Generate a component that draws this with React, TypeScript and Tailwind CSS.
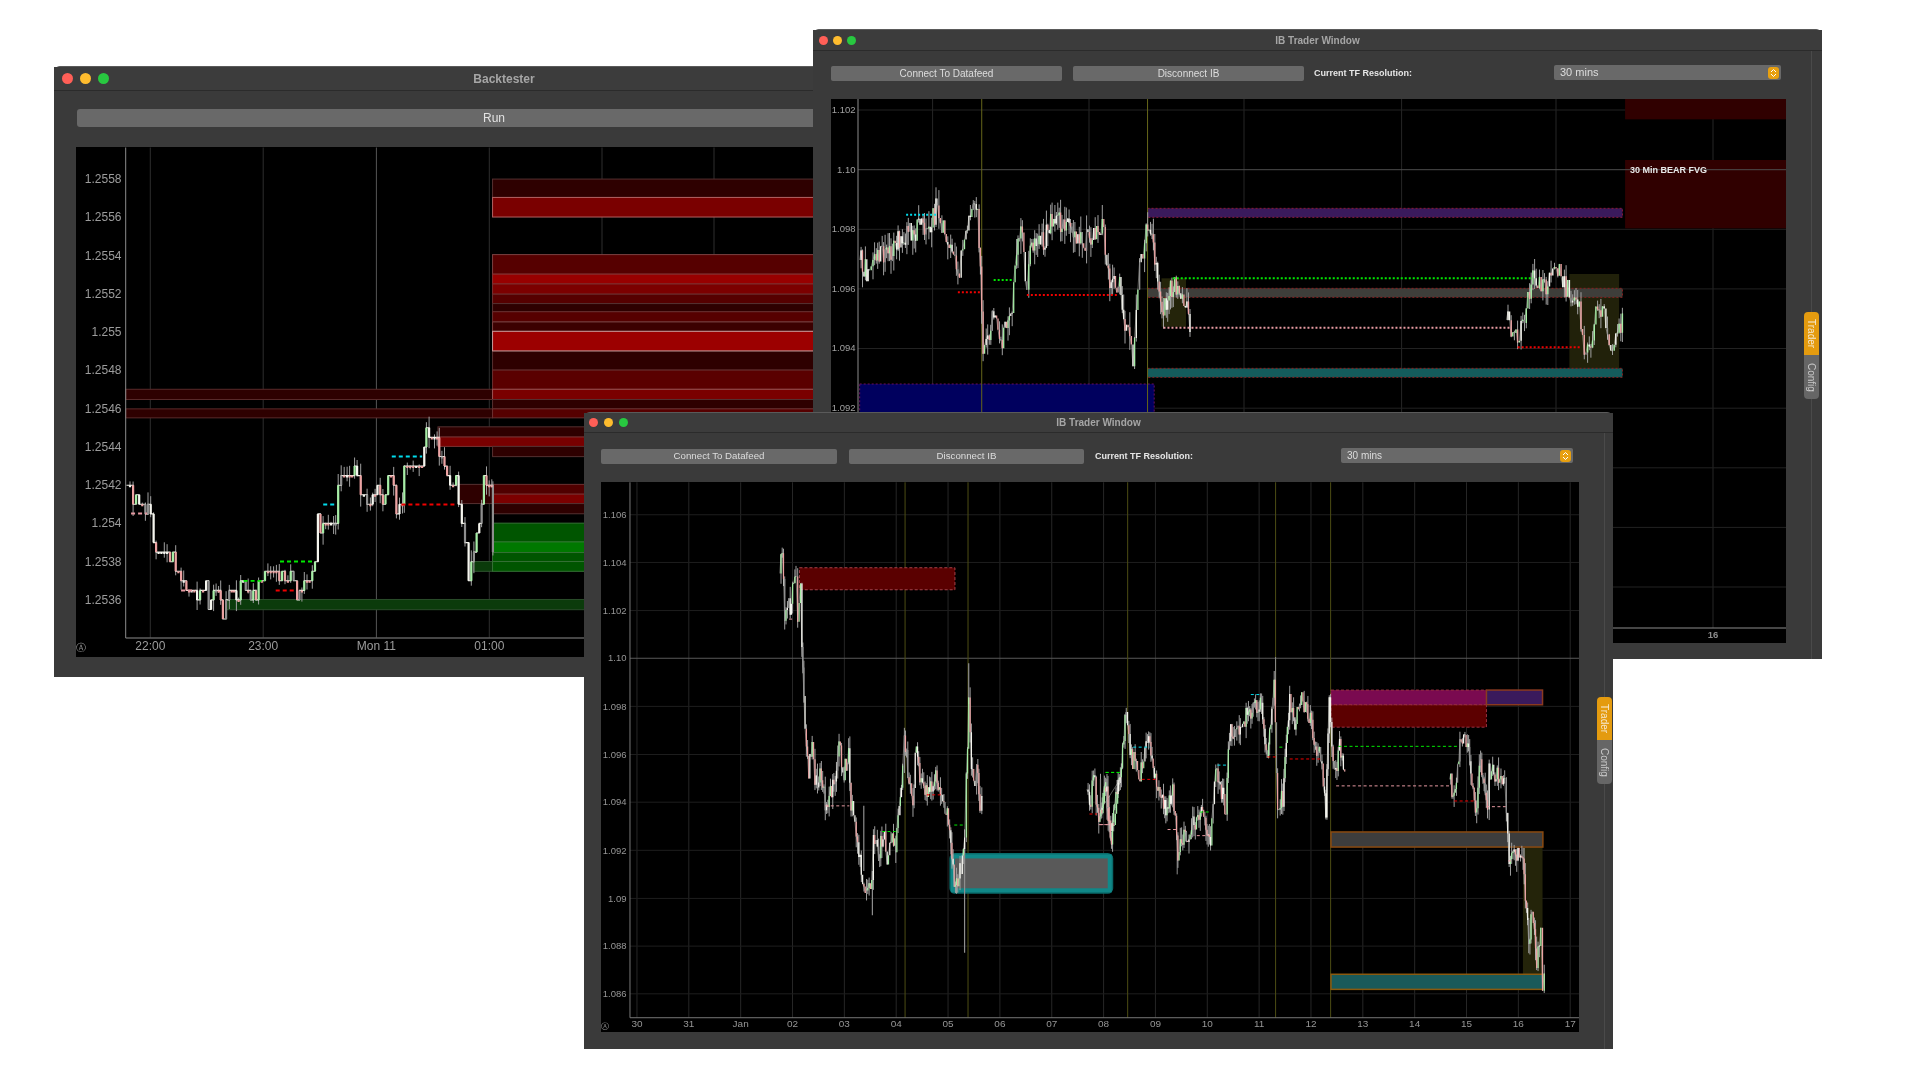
import React from "react";

type P = [number, number];
type Zone = { a: number; b: number; t: number; u: number; fill: string; stroke?: string; dash?: string; sw?: number; rx?: number };
type Dash = { a: number; b: number; y: number; c: string };

const rng = (seed: number) => {
  let s = seed;
  return () => {
    s = (s * 16807) % 2147483647;
    return s / 2147483647;
  };
};

function Candles({ pts, step, noise, seed, width, wick, q, lineW = 0.8 }: { pts: P[]; step: number; noise: number; seed: number; width: number; wick: number; q?: [number, number]; lineW?: number }) {
  const r = rng(seed);
  let wicks = "";
  let green = "";
  let pink = "";
  let white = "";
  let gray = "";
  let line = "";
  const snap = (y: number) => (q ? Math.round((y - q[0]) / q[1]) * q[1] + q[0] : y);
  let prev = snap(pts[0][1]);
  line = `M${pts[0][0]} ${prev}`;
  for (let i = 0; i < pts.length - 1; i++) {
    const [x1, y1] = pts[i];
    const [x2, y2] = pts[i + 1];
    const n = Math.max(1, Math.round((x2 - x1) / step));
    for (let j = 1; j <= n; j++) {
      const x = x1 + ((x2 - x1) * j) / n;
      const y = snap(y1 + ((y2 - y1) * j) / n + (r() - 0.5) * noise);
      const lo = Math.min(prev, y);
      const hi = Math.max(prev, y);
      const seg = `M${x.toFixed(1)} ${lo.toFixed(1)}V${(hi === lo ? hi + 2 : hi).toFixed(1)}`;
      const k = r();
      if (k < 0.28) white += seg;
      else if (k < 0.42) gray += seg;
      else if (y < prev) green += seg;
      else pink += seg;
      if (r() < 0.7) wicks += `M${x.toFixed(1)} ${(lo - r() * wick).toFixed(1)}V${(hi + r() * wick).toFixed(1)}`;
      line += q ? `H${x.toFixed(1)}V${y.toFixed(1)}` : `L${x.toFixed(1)} ${y.toFixed(1)}`;
      prev = y;
    }
  }
  return (
    <g fill="none">
      <path d={wicks} stroke="#a0a0a0" strokeWidth={1} />
      <path d={line} stroke="#f2f2ea" strokeWidth={lineW} />
      <path d={gray} stroke="#8e8e8e" strokeWidth={width} />
      <path d={green} stroke="#a6eea6" strokeWidth={width} />
      <path d={pink} stroke="#eda2a2" strokeWidth={width} />
      <path d={white} stroke="#f5f5ee" strokeWidth={width} />
    </g>
  );
}

function Zones({ zones, fx, fy }: { zones: Zone[]; fx: (n: number) => number; fy: (n: number) => number }) {
  return (
    <g>
      {zones.map((z, i) => (
        <rect key={i} x={fx(z.a)} y={fy(z.t)} width={fx(z.b) - fx(z.a)} height={fy(z.u) - fy(z.t)} fill={z.fill} stroke={z.stroke} strokeDasharray={z.dash} strokeWidth={z.sw ?? 1} rx={z.rx} />
      ))}
    </g>
  );
}

function Dashes({ items, fx, fy, w, arr }: { items: Dash[]; fx: (n: number) => number; fy: (n: number) => number; w: number; arr: string }) {
  return (
    <g>
      {items.map((d, i) => (
        <line key={i} x1={fx(d.a)} x2={fx(d.b)} y1={fy(d.y)} y2={fy(d.y)} stroke={d.c} strokeWidth={w} strokeDasharray={arr} />
      ))}
    </g>
  );
}

const RED = "#f00000";
const GRN = "#00e800";
const CYN = "#00dcec";
const PNK = "#e79aa2";

function Lights({ size, gap }: { size: string; gap: string }) {
  return (
    <div className={`flex items-center ${gap}`}>
      <span className={`block rounded-full bg-[#ff5f57] ${size}`} />
      <span className={`block rounded-full bg-[#febc2e] ${size}`} />
      <span className={`block rounded-full bg-[#28c840] ${size}`} />
    </div>
  );
}

function Stepper() {
  return (
    <span className="flex h-[12px] w-[11px] items-center justify-center rounded-[3px] bg-[#e8a00f]">
      <svg width="7" height="10" viewBox="0 0 7 10" fill="none" stroke="#fff" strokeWidth="1">
        <path d="M1 4 3.5 1.5 6 4M1 6 3.5 8.5 6 6" />
      </svg>
    </span>
  );
}

function Tabs({ text }: { text: string }) {
  return (
    <div className={`flex w-[15px] flex-col ${text}`}>
      <div className="flex h-[43px] items-center justify-center rounded-t-[4px] bg-[#e49b0f] text-[#f6e8cf] [writing-mode:vertical-rl]">Trader</div>
      <div className="flex h-[44px] items-center justify-center rounded-b-[4px] bg-[#666666] text-[#c9c9c9] [writing-mode:vertical-rl]">Config</div>
    </div>
  );
}

/* ---------- Backtester chart ---------- */
const lx = (n: number) => 40 + n / 1.96;
const ly = (n: number) => 50 + n / 2.45;
const sx = (n: number) => 40 + n / 2.8;
const sy = (n: number) => 390 + n / 3;

const leftZones: Zone[] = [
  { a: 168, b: 887, t: 830, u: 855, fill: "#2e0000", stroke: "#5a2a2a" },
  { a: 168, b: 887, t: 878, u: 900, fill: "#2e0000", stroke: "#5a2a2a" },
  { a: 887, b: 1700, t: 315, u: 360, fill: "#2e0000", stroke: "#553030" },
  { a: 887, b: 1700, t: 360, u: 408, fill: "#7a0000", stroke: "#b06060" },
  { a: 887, b: 1700, t: 500, u: 548, fill: "#560000", stroke: "#7a4040" },
  { a: 887, b: 1700, t: 548, u: 572, fill: "#980000", stroke: "#8a3030" },
  { a: 887, b: 1700, t: 572, u: 597, fill: "#7c0000", stroke: "#7a3030" },
  { a: 887, b: 1700, t: 597, u: 620, fill: "#560000", stroke: "#6a3030" },
  { a: 887, b: 1700, t: 620, u: 640, fill: "#2e0000", stroke: "#553030" },
  { a: 887, b: 1700, t: 640, u: 665, fill: "#560000", stroke: "#6a3030" },
  { a: 887, b: 1700, t: 665, u: 688, fill: "#3c0000", stroke: "#7a4040" },
  { a: 887, b: 1700, t: 736, u: 783, fill: "#2e0000", stroke: "#553030" },
  { a: 887, b: 1700, t: 783, u: 830, fill: "#5a0000", stroke: "#6a3030" },
  { a: 887, b: 1700, t: 830, u: 855, fill: "#7a0000", stroke: "#9a5050" },
  { a: 887, b: 1700, t: 855, u: 878, fill: "#2e0000", stroke: "#553030" },
  { a: 887, b: 1700, t: 878, u: 900, fill: "#560000", stroke: "#6a3030" },
  { a: 887, b: 1700, t: 688, u: 736, fill: "#9c0000", stroke: "#c89a9a" },
  { a: 780, b: 1700, t: 922, u: 947, fill: "#2e0000", stroke: "#553030" },
  { a: 780, b: 1700, t: 947, u: 970, fill: "#780000", stroke: "#7a3030" },
  { a: 887, b: 1700, t: 970, u: 995, fill: "#2e0000", stroke: "#553030" },
  { a: 820, b: 887, t: 1063, u: 1110, fill: "#2e0000", stroke: "#553030" },
  { a: 887, b: 1700, t: 1063, u: 1087, fill: "#500000", stroke: "#6a3030" },
  { a: 887, b: 1700, t: 1087, u: 1110, fill: "#7c0000", stroke: "#7a3030" },
  { a: 887, b: 1700, t: 1110, u: 1135, fill: "#2e0000", stroke: "#553030" },
  { a: 887, b: 1700, t: 1158, u: 1204, fill: "#005500", stroke: "#357035" },
  { a: 887, b: 1700, t: 1204, u: 1230, fill: "#007800", stroke: "#307a30" },
  { a: 887, b: 1700, t: 1230, u: 1252, fill: "#005500", stroke: "#357035" },
  { a: 850, b: 887, t: 1252, u: 1276, fill: "#0b3b0b", stroke: "#305530" },
  { a: 887, b: 1700, t: 1252, u: 1276, fill: "#005500", stroke: "#357035" },
  { a: 365, b: 1700, t: 1345, u: 1370, fill: "#0b3b0b", stroke: "#2a4d2a" },
];

const leftSeries: P[] = ([
  [242, 284], [252, 313], [295, 342], [310, 370], [318, 456], [332, 485], [380, 513], [395, 571], [432, 600], [440, 630], [465, 571], [472, 657], [500, 600], [512, 685], [530, 600], [550, 630], [562, 571], [590, 630], [612, 600], [630, 543], [710, 571], [720, 628], [740, 571], [770, 513], [778, 398], [822, 398], [828, 370], [835, 284], [860, 256], [888, 230], [898, 313], [925, 342], [945, 284], [960, 342], [975, 230], [998, 342], [1015, 342], [1020, 230], [1070, 228], [1082, 140], [1112, 140], [1118, 198], [1140, 256], [1165, 284], [1172, 342], [1190, 456], [1200, 543], [1215, 485], [1230, 399], [1243, 284], [1265, 284], [1268, 485],
] as P[]).map(([x, y]) => [sx(x), sy(y)]);

const leftDash: Dash[] = [
  { a: 255, b: 300, y: 369, c: PNK },
  { a: 395, b: 435, y: 600, c: PNK },
  { a: 570, b: 630, y: 571, c: GRN },
  { a: 672, b: 770, y: 513, c: GRN },
  { a: 660, b: 715, y: 600, c: RED },
  { a: 793, b: 830, y: 342, c: CYN },
  { a: 985, b: 1070, y: 198, c: CYN },
  { a: 1012, b: 1165, y: 342, c: RED },
];

function LeftChart() {
  const ticks = ["1.2558", "1.2556", "1.2554", "1.2552", "1.255", "1.2548", "1.2546", "1.2544", "1.2542", "1.254", "1.2538", "1.2536"];
  return (
    <svg className="block h-full w-full" viewBox="76 147 835 509">
      {[150.3, 263.2, 376.4, 489.3, 602, 714].map((x, i) => (
        <line key={x} x1={x} x2={x} y1={147} y2={637} stroke={i === 2 ? "#555555" : "#2e2e2e"} />
      ))}
      <Zones zones={leftZones} fx={lx} fy={ly} />
      <Candles pts={leftSeries} step={2.8} noise={13} seed={77} width={2.2} wick={12} q={[484.7, 9.56]} lineW={1.1} />
      <Dashes items={leftDash} fx={sx} fy={sy} w={1.8} arr="4 3" />
      <line x1={125.7} x2={125.7} y1={147} y2={637.5} stroke="#8c8c8c" />
      <line x1={125.7} x2={911} y1={637.5} y2={637.5} stroke="#8c8c8c" />
      {ticks.map((t, i) => (
        <text key={t} x={121.5} y={182.6 + i * 38.25} textAnchor="end" fontSize={12} fill="#9c9c9c">
          {t}
        </text>
      ))}
      {[["22:00", 150.3], ["23:00", 263.2], ["Mon 11", 376.4], ["01:00", 489.3]].map(([t, x]) => (
        <text key={t as string} x={x as number} y={649.5} textAnchor="middle" fontSize={12} fill="#9c9c9c">
          {t}
        </text>
      ))}
      <text x={76} y={650} fontSize={10} fill="#9c9c9c" fontFamily="DejaVu Sans">Ⓐ</text>
    </svg>
  );
}

/* ---------- Back IB chart ---------- */
const bx = (n: number) => 800 + n / 1.5077;
const by = (n: number) => 20 + n / 3;
const D = "2 2";
const backZones: Zone[] = [
  { a: 1244, b: 1487, t: 237, u: 298, fill: "#300000" },
  { a: 1244, b: 1487, t: 420, u: 625, fill: "#300000" },
  { a: 90, b: 534, t: 1092, u: 1400, fill: "#00005e", stroke: "#6a1060", dash: D },
  { a: 545, b: 582, t: 775, u: 920, fill: "#24240a" },
  { a: 1160, b: 1235, t: 762, u: 1045, fill: "#21210a" },
  { a: 524, b: 1240, t: 565, u: 592, fill: "#3a1a5c", stroke: "#8a1a3a", dash: D },
  { a: 524, b: 1240, t: 805, u: 832, fill: "#3e3e3a", stroke: "#8a2020", dash: D },
  { a: 524, b: 1240, t: 1045, u: 1072, fill: "#145c5c", stroke: "#8a2020", dash: D },
];
const backDash: Dash[] = [
  { a: 238, b: 272, y: 817, c: RED },
  { a: 160, b: 205, y: 584, c: CYN },
  { a: 292, b: 320, y: 780, c: GRN },
  { a: 342, b: 480, y: 825, c: RED },
  { a: 562, b: 1105, y: 775, c: GRN },
  { a: 548, b: 1070, y: 923, c: PNK },
  { a: 1082, b: 1178, y: 982, c: RED },
];
const mapB = (a: number[][]): P[] => a.map(([x, y]) => [bx(x), by(y)]);
const backA = mapB([[90, 720], [105, 770], [115, 710], [135, 690], [150, 650], [170, 630], [190, 630], [205, 570], [225, 650], [238, 780], [248, 640], [268, 540], [276, 990], [290, 900], [305, 960], [320, 850], [333, 610], [342, 810], [345, 700], [365, 670], [378, 610], [395, 600], [410, 640], [430, 660], [445, 660], [458, 620], [465, 780], [482, 800], [490, 900], [502, 1010], [512, 760], [522, 600], [535, 700], [548, 880], [565, 780], [588, 900]]);
const backB = mapB([[1065, 900], [1082, 950], [1095, 860], [1105, 770], [1125, 790], [1145, 750], [1165, 850], [1175, 870], [1185, 1030], [1205, 840], [1225, 990], [1240, 890]]);

function BackChart() {
  const ticks = ["1.102", "1.10", "1.098", "1.096", "1.094", "1.092"];
  return (
    <svg className="block h-full w-full" viewBox="831 99 955 544">
      {[932.6, 1089, 1244, 1401.6, 1556, 1713].map((x) => (
        <line key={x} x1={x} x2={x} y1={99} y2={628} stroke="#262626" />
      ))}
      {[110, 229.3, 288.9, 348.5, 408.2, 467.8, 527.4, 587].map((y) => (
        <line key={y} x1={858} x2={1786} y1={y} y2={y} stroke="#222222" />
      ))}
      <Zones zones={backZones} fx={bx} fy={by} />
      <line x1={858} x2={1786} y1={169.7} y2={169.7} stroke="#4d4d4d" />
      <line x1={bx(274)} x2={bx(274)} y1={99} y2={640} stroke="#66661a" />
      <line x1={bx(524)} x2={bx(524)} y1={99} y2={640} stroke="#66661a" />
      <Candles pts={backA} step={1.5} noise={24} seed={31} width={1.3} wick={16} lineW={0.4} />
      <Candles pts={backB} step={1.7} noise={22} seed={47} width={1.4} wick={12} lineW={0.4} />
      <Dashes items={backDash} fx={bx} fy={by} w={2} arr={D} />
      <line x1={858} x2={858} y1={99} y2={628} stroke="#8c8c8c" />
      <line x1={858} x2={1786} y1={628} y2={628} stroke="#8c8c8c" />
      {ticks.map((t, i) => (
        <text key={t} x={855.5} y={113 + i * 59.6} textAnchor="end" fontSize={9.5} fill="#a0a0a0">
          {t}
        </text>
      ))}
      <text x={1713} y={638} textAnchor="middle" fontSize={9.5} fontWeight={700} fill="#8c8c8c">16</text>
      <text x={1630} y={173} fontSize={9} fontWeight={700} fill="#e8e8e8">30 Min BEAR FVG</text>
    </svg>
  );
}

/* ---------- Front IB chart ---------- */
const f3x = (n: number) => 580 + n / 2.904;
const f4x = (n: number) => 1100 + n / 2.904;
const fy = (n: number) => 410 + n / 2.45;
const map3 = (a: number[][]): P[] => a.map(([x, y]) => [f3x(x), fy(y)]);
const map4 = (a: number[][]): P[] => a.map(([x, y]) => [f4x(x), fy(y)]);

const frontA = map3([[578, 400], [585, 355], [592, 500], [600, 470], [608, 500], [615, 410], [625, 385], [630, 510], [638, 400], [642, 580], [648, 720], [655, 800], [662, 880], [672, 820], [680, 930], [695, 890], [710, 960], [725, 945], [735, 905], [750, 830], [765, 890], [778, 830], [785, 960], [800, 1050], [815, 1130], [830, 1170], [845, 1160], [850, 1060], [865, 1090], [878, 1040], [890, 1090], [905, 1040], [915, 1060], [925, 990], [935, 860], [940, 790], [950, 880], [965, 950], [975, 820], [985, 900], [1000, 930], [1020, 920], [1035, 890], [1045, 950], [1065, 990], [1075, 1050], [1085, 1170], [1095, 1170], [1115, 1060], [1120, 910], [1127, 720], [1135, 880], [1145, 930], [1150, 860], [1160, 970], [1165, 960]]);
const frontB = [
  ...map3([[1470, 930], [1478, 990], [1490, 890], [1505, 1000], [1525, 920], [1542, 1050], [1555, 950], [1568, 880]]),
  ...map4([[0, 980], [15, 920], [30, 1050], [50, 940], [75, 740], [90, 850], [115, 890], [140, 810], [160, 890], [190, 990], [210, 920], [225, 1080], [250, 1040], [290, 990], [320, 1050], [335, 880], [365, 980], [375, 790], [400, 790], [430, 740], [465, 720], [485, 840], [505, 670], [515, 980], [530, 950], [550, 710], [565, 770], [585, 710], [610, 750], [625, 820], [640, 850], [655, 980], [665, 700], [680, 900], [695, 830], [710, 905]]),
];
const frontC = map4([[1015, 905], [1028, 950], [1045, 810], [1070, 810], [1090, 990], [1105, 860], [1125, 960], [1130, 890], [1150, 885], [1175, 910], [1180, 1000], [1188, 1090], [1210, 1100], [1225, 1080], [1235, 1190], [1245, 1290], [1255, 1240], [1268, 1350], [1280, 1270], [1285, 1400], [1290, 1390]]);

const front4Zones: Zone[] = [
  { a: 1228, b: 1285, t: 1060, u: 1420, fill: "#24240a" },
  { a: 670, b: 1122, t: 722, u: 777, fill: "#5c0000", stroke: "#9a3040", dash: "3 2" },
  { a: 670, b: 1122, t: 686, u: 722, fill: "#7a0a50", stroke: "#a03040", dash: "3 2" },
  { a: 1122, b: 1285, t: 686, u: 722, fill: "#3a1a5c", stroke: "#8a3a20", sw: 1.5 },
  { a: 670, b: 1286, t: 1034, u: 1071, fill: "#3d3d3d", stroke: "#8a4a10", sw: 1.5 },
  { a: 670, b: 1286, t: 1383, u: 1420, fill: "#1a5a5a", stroke: "#8a5a10", sw: 1.5 },
];
const front4Dash: Dash[] = [
  { a: 692, b: 1040, y: 824, c: GRN },
  { a: 685, b: 1015, y: 921, c: PNK },
  { a: 1028, b: 1090, y: 958, c: RED },
  { a: 1122, b: 1178, y: 972, c: PNK },
  { a: 1185, b: 1195, y: 1105, c: PNK },
  { a: 15, b: 58, y: 888, c: GRN },
  { a: 95, b: 145, y: 826, c: CYN },
  { a: 120, b: 160, y: 905, c: RED },
  { a: 340, b: 368, y: 870, c: CYN },
  { a: 290, b: 320, y: 985, c: GRN },
  { a: 195, b: 225, y: 1028, c: PNK },
  { a: 280, b: 315, y: 1043, c: PNK },
  { a: 437, b: 468, y: 697, c: CYN },
  { a: 485, b: 510, y: 850, c: RED },
  { a: 520, b: 530, y: 826, c: GRN },
  { a: 550, b: 640, y: 855, c: RED },
  { a: 0, b: 25, y: 1016, c: PNK },
];
const front3Dash: Dash[] = [
  { a: 605, b: 615, y: 512, c: PNK },
  { a: 710, b: 780, y: 970, c: PNK },
  { a: 875, b: 915, y: 1033, c: GRN },
  { a: 1005, b: 1048, y: 943, c: RED },
  { a: 1085, b: 1118, y: 1017, c: GRN },
  { a: 1478, b: 1500, y: 990, c: RED },
  { a: 1505, b: 1535, y: 1016, c: PNK },
  { a: 1525, b: 1568, y: 888, c: GRN },
];

function FrontChart() {
  const ticks: [string, number][] = [["1.106", 256], ["1.104", 373], ["1.102", 491], ["1.10", 608], ["1.098", 726], ["1.096", 844], ["1.094", 961], ["1.092", 1079], ["1.09", 1197], ["1.088", 1314], ["1.086", 1431]];
  const dates = ["30", "31", "Jan", "02", "03", "04", "05", "06", "07", "08", "09", "10", "11", "12", "13", "14", "15", "16", "17"];
  return (
    <svg className="block h-full w-full" viewBox="600 482 979 550">
      {dates.map((d, i) => (
        <line key={d} x1={636 + i * 51.9} x2={636 + i * 51.9} y1={482} y2={1018} stroke="#262626" />
      ))}
      {ticks.map(([t, Y]) =>
        t === "1.10" ? null : <line key={t} x1={629} x2={1579} y1={fy(Y)} y2={fy(Y)} stroke="#1e1e1e" />
      )}
      <line x1={629} x2={1579} y1={fy(608)} y2={fy(608)} stroke="#5a5a5a" />
      {[f3x(942), f3x(1125), f4x(79), f4x(509), f4x(669)].map((x) => (
        <line key={x} x1={x} x2={x} y1={482} y2={1018} stroke="#4d4d14" />
      ))}
      <Zones zones={front4Zones} fx={f4x} fy={fy} />
      <Zones
        zones={[
          { a: 635, b: 1087, t: 386, u: 440, fill: "#5a0000", stroke: "#a84048", dash: "3 2" },
          { a: 1081, b: 1537, t: 1094, u: 1177, fill: "#595959", stroke: "#0a6b6b", sw: 7, rx: 2 },
          { a: 1081, b: 1537, t: 1094, u: 1177, fill: "#595959", stroke: "#108888", sw: 4 },
        ]}
        fx={f3x}
        fy={fy}
      />
      <path d={`M${f3x(1127)} ${fy(620)}V${fy(720)}M${f3x(1115)} ${fy(1060)}V${fy(1330)}M${f3x(847)} ${fy(1130)}V${fy(1238)}M${f3x(822)} ${fy(970)}V${fy(1130)}`} stroke="#8e8e8e" strokeWidth={1.2} fill="none" />
      <path d={`M${f4x(509)} ${fy(605)}V${fy(720)}M${f4x(223)} ${fy(1040)}V${fy(1138)}`} stroke="#8e8e8e" strokeWidth={1} fill="none" />
      <Candles pts={frontA} step={1.2} noise={20} seed={11} width={1.2} wick={12} lineW={0.4} />
      <Candles pts={frontB} step={1.2} noise={20} seed={23} width={1.2} wick={12} lineW={0.4} />
      <Candles pts={frontC} step={1.2} noise={20} seed={59} width={1.2} wick={12} lineW={0.4} />
      <Dashes items={front4Dash} fx={f4x} fy={fy} w={1} arr="3 2.5" />
      <Dashes items={front3Dash} fx={f3x} fy={fy} w={1} arr="3 2.5" />
      <line x1={629} x2={629} y1={482} y2={1018} stroke="#777777" />
      <line x1={629} x2={1579} y1={1018} y2={1018} stroke="#777777" />
      {ticks.map(([t, Y]) => (
        <text key={t} x={625.5} y={fy(Y) + 3.2} textAnchor="end" fontSize={9.5} fill="#969696">
          {t}
        </text>
      ))}
      {dates.map((d, i) => (
        <text key={d} x={636 + i * 51.9} y={1027.5} textAnchor="middle" fontSize={10} fill="#969696">
          {d}
        </text>
      ))}
      <text x={600} y={1029} fontSize={8.5} fill="#969696" fontFamily="DejaVu Sans">Ⓐ</text>
    </svg>
  );
}

export default function App() {
  return (
    <div className="relative h-[1080px] w-[1920px] overflow-hidden bg-white font-['Liberation_Sans',Arial,sans-serif] [filter:blur(0.35px)]">
      {/* Backtester */}
      <section className="absolute left-[54px] top-[66px] flex h-[611px] w-[900px] flex-col rounded-t-[6px] border-t border-[#5a5a5a] bg-[#3a3a3a]">
        <header className="grid h-[24px] shrink-0 grid-cols-[1fr_auto_1fr] items-center border-b border-[#2b2b2b] bg-[#3c3c3c] px-[8px]">
          <Lights size="h-[11px] w-[11px]" gap="gap-[7px]" />
          <h1 className="text-[12px] font-bold text-[#a6a6a6]">Backtester</h1>
          <span />
        </header>
        <div className="flex min-h-0 flex-1 flex-col pb-[20px] pl-[22px] pr-[43px] pt-[18px]">
          <button className="ml-px h-[18px] shrink-0 rounded-[3px] bg-[#696969] text-[12px] text-[#e2e2e2]">Run</button>
          <div className="mt-[20px] min-h-0 flex-1 bg-black">
            <LeftChart />
          </div>
        </div>
      </section>

      {/* Back IB window */}
      <section className="absolute left-[813px] top-[29px] flex h-[630px] w-[1009px] flex-col rounded-t-[6px] border-t border-[#5a5a5a] bg-[#3a3a3a]">
        <header className="grid h-[21px] shrink-0 grid-cols-[1fr_auto_1fr] items-center border-b border-[#2b2b2b] bg-[#3c3c3c] px-[6px]">
          <Lights size="h-[9px] w-[9px]" gap="gap-[5px]" />
          <h2 className="text-[10px] font-bold text-[#a6a6a6]">IB Trader Window</h2>
          <span />
        </header>
        <div className="relative flex min-h-0 flex-1">
          <div className="flex min-w-0 flex-1 flex-col pb-[16px] pl-[18px] pt-[15px]">
            <div className="flex h-[15px] shrink-0 items-center text-[10px]">
              <button className="h-[15px] w-[231px] rounded-[2px] bg-[#696969] text-[#dddddd]">Connect To Datafeed</button>
              <button className="ml-[11px] h-[15px] w-[231px] rounded-[2px] bg-[#696969] text-[#dddddd]">Disconnect IB</button>
              <span className="ml-[10px] flex-1 text-[9px] font-bold text-[#e6e6e6]">Current TF Resolution:</span>
              <div className="mr-[5px] flex h-[15px] w-[227px] -translate-y-px items-center justify-between rounded-[2px] bg-[#696969] pl-[6px] pr-[2px] text-[11px] text-[#dddddd]">
                30 mins
                <Stepper />
              </div>
            </div>
            <div className="mt-[18px] min-h-0 flex-1 bg-black">
              <BackChart />
            </div>
          </div>
          <div className="absolute bottom-0 right-[10px] top-0 w-px bg-[#4a4a4a]" />
          <aside className="relative w-[36px] shrink-0 pl-[18px] pt-[261px]">
            <Tabs text="text-[10px]" />
          </aside>
        </div>
      </section>

      {/* Front IB window */}
      <section className="absolute left-[584px] top-[412px] flex h-[637px] w-[1029px] flex-col rounded-t-[6px] border-t border-[#5a5a5a] bg-[#3a3a3a]">
        <header className="grid h-[20px] shrink-0 grid-cols-[1fr_auto_1fr] items-center border-b border-[#2b2b2b] bg-[#3c3c3c] px-[5px]">
          <Lights size="h-[9px] w-[9px]" gap="gap-[6px]" />
          <h2 className="text-[10px] font-bold text-[#a6a6a6]">IB Trader Window</h2>
          <span />
        </header>
        <div className="relative flex min-h-0 flex-1">
          <div className="flex min-w-0 flex-1 flex-col pb-[17px] pl-[17px] pt-[16px]">
            <div className="flex h-[15px] shrink-0 items-center text-[9.7px]">
              <button className="h-[15px] w-[236px] rounded-[2px] bg-[#696969] text-[#dddddd]">Connect To Datafeed</button>
              <button className="ml-[12px] h-[15px] w-[235px] rounded-[2px] bg-[#696969] text-[#dddddd]">Disconnect IB</button>
              <span className="ml-[11px] flex-1 text-[9px] font-bold text-[#e6e6e6]">Current TF Resolution:</span>
              <div className="mr-[6px] flex h-[15px] w-[232px] -translate-y-px items-center justify-between rounded-[2px] bg-[#696969] pl-[6px] pr-[2px] text-[10px] text-[#dddddd]">
                30 mins
                <Stepper />
              </div>
            </div>
            <div className="mt-[18px] min-h-0 flex-1 bg-black">
              <FrontChart />
            </div>
          </div>
          <div className="absolute bottom-0 right-[8px] top-0 w-px bg-[#4a4a4a]" />
          <aside className="relative w-[34px] shrink-0 pl-[18px] pt-[264px]">
            <Tabs text="text-[10px]" />
          </aside>
        </div>
      </section>
    </div>
  );
}
